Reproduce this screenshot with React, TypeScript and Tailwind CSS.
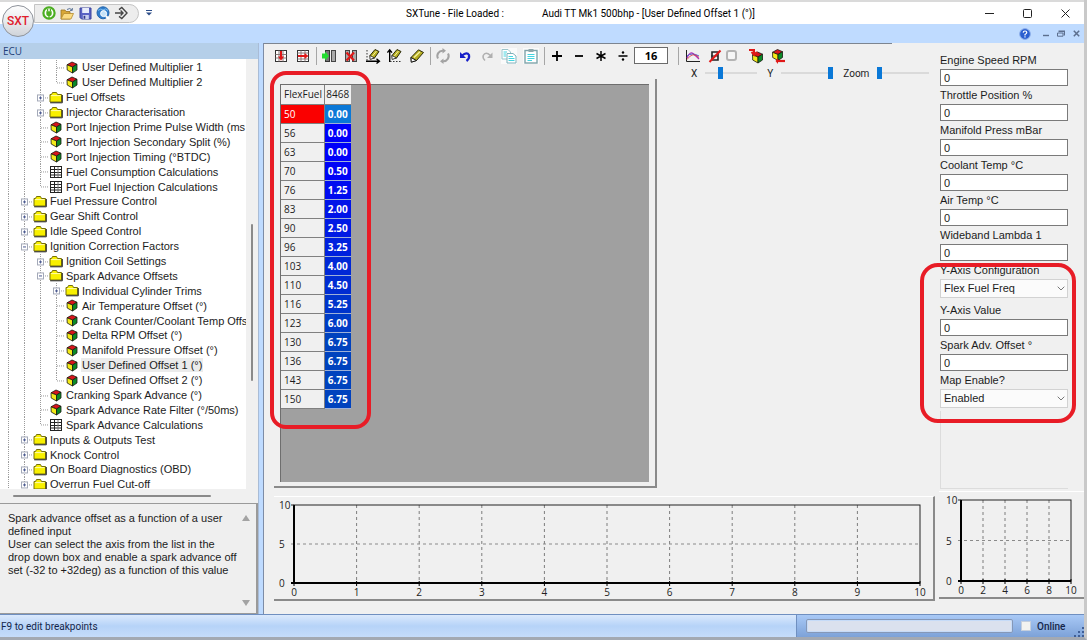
import React from "react";

type IconKind = "cube" | "folder" | "table";
type Guide = "none" | "line" | "tee" | "elbow" | "plus" | "minus";
interface TreeItem {
  guides: Guide[];
  icon: IconKind;
  label: string;
  selected?: boolean;
}

const L: Guide = "line";
const T: Guide = "tee";
const E: Guide = "elbow";
const P: Guide = "plus";
const M: Guide = "minus";

const tree: TreeItem[] = [
  { guides: [L, L, L, T], icon: "cube", label: "User Defined Multiplier 1" },
  { guides: [L, L, L, E], icon: "cube", label: "User Defined Multiplier 2" },
  { guides: [L, L, P], icon: "folder", label: "Fuel Offsets" },
  { guides: [L, L, P], icon: "folder", label: "Injector Characterisation" },
  { guides: [L, L, T], icon: "cube", label: "Port Injection Prime Pulse Width (ms" },
  { guides: [L, L, T], icon: "cube", label: "Port Injection Secondary Split (%)" },
  { guides: [L, L, T], icon: "cube", label: "Port Injection Timing (°BTDC)" },
  { guides: [L, L, T], icon: "table", label: "Fuel Consumption Calculations" },
  { guides: [L, L, E], icon: "table", label: "Port Fuel Injection Calculations" },
  { guides: [L, P], icon: "folder", label: "Fuel Pressure Control" },
  { guides: [L, P], icon: "folder", label: "Gear Shift Control" },
  { guides: [L, P], icon: "folder", label: "Idle Speed Control" },
  { guides: [L, M], icon: "folder", label: "Ignition Correction Factors" },
  { guides: [L, L, P], icon: "folder", label: "Ignition Coil Settings" },
  { guides: [L, L, M], icon: "folder", label: "Spark Advance Offsets" },
  { guides: [L, L, L, P], icon: "folder", label: "Individual Cylinder Trims" },
  { guides: [L, L, L, T], icon: "cube", label: "Air Temperature Offset (°)" },
  { guides: [L, L, L, T], icon: "cube", label: "Crank Counter/Coolant Temp Offs" },
  { guides: [L, L, L, T], icon: "cube", label: "Delta RPM Offset (°)" },
  { guides: [L, L, L, T], icon: "cube", label: "Manifold Pressure Offset (°)" },
  { guides: [L, L, L, T], icon: "cube", label: "User Defined Offset 1 (°)", selected: true },
  { guides: [L, L, L, E], icon: "cube", label: "User Defined Offset 2 (°)" },
  { guides: [L, L, T], icon: "cube", label: "Cranking Spark Advance (°)" },
  { guides: [L, L, T], icon: "cube", label: "Spark Advance Rate Filter (°/50ms)" },
  { guides: [L, L, E], icon: "table", label: "Spark Advance Calculations" },
  { guides: [L, P], icon: "folder", label: "Inputs & Outputs Test" },
  { guides: [L, P], icon: "folder", label: "Knock Control" },
  { guides: [L, P], icon: "folder", label: "On Board Diagnostics (OBD)" },
  { guides: [L, P], icon: "folder", label: "Overrun Fuel Cut-off" },
];

const cells: { axis: number; value: string; tone: string }[] = [
  { axis: 50, value: "0.00", tone: "bg-[#0a78d7]" },
  { axis: 56, value: "0.00", tone: "bg-[#0000fa]" },
  { axis: 63, value: "0.00", tone: "bg-[#0000fa]" },
  { axis: 70, value: "0.50", tone: "bg-[#0004f6]" },
  { axis: 76, value: "1.25", tone: "bg-[#000cf0]" },
  { axis: 83, value: "2.00", tone: "bg-[#0014e8]" },
  { axis: 90, value: "2.50", tone: "bg-[#001ae4]" },
  { axis: 96, value: "3.25", tone: "bg-[#0020de]" },
  { axis: 103, value: "4.00", tone: "bg-[#0028d6]" },
  { axis: 110, value: "4.50", tone: "bg-[#002cd2]" },
  { axis: 116, value: "5.25", tone: "bg-[#0034cc]" },
  { axis: 123, value: "6.00", tone: "bg-[#003cc6]" },
  { axis: 130, value: "6.75", tone: "bg-[#0042be]" },
  { axis: 136, value: "6.75", tone: "bg-[#0042be]" },
  { axis: 143, value: "6.75", tone: "bg-[#0042be]" },
  { axis: 150, value: "6.75", tone: "bg-[#0042be]" },
];

function Guides({ kind }: { kind: Guide }) {
  const full = kind !== "elbow";
  const branch = kind !== "line";
  const box = kind === "plus" || kind === "minus";
  return (
    <svg className="h-full w-4 shrink-0 overflow-visible" aria-hidden="true">
      <line x1="8.5" y1="0" x2="8.5" y2={full ? "100%" : "50%"} stroke="#9a9a9a" strokeDasharray="1 1" />
      <svg y="50%" className="overflow-visible">
        {branch && <line x1="9" y1="0.5" x2="17" y2="0.5" stroke="#9a9a9a" strokeDasharray="1 1" />}
        {box && <rect x="5.5" y="-2.5" width="6" height="6" fill="#fff" stroke="#a3a9b8" />}
        {box && <line x1="7" y1="0.5" x2="10" y2="0.5" stroke="#4b5a90" />}
        {kind === "plus" && <line x1="8.5" y1="-1" x2="8.5" y2="2" stroke="#4b5a90" />}
      </svg>
    </svg>
  );
}

function CubeShape() {
  return (
    <g stroke="#1a1a10" strokeWidth="0.8" strokeLinejoin="round">
      <path d="M1 3.8 6 1 11 3.2 6.5 6Z" fill="#d8141c" />
      <path d="M1 3.8 6.5 6V12L1.2 9Z" fill="#f4ea18" />
      <path d="M11 3.2 6.5 6V12L11 9Z" fill="#0b8a28" />
    </g>
  );
}

function TreeIcon({ kind }: { kind: IconKind }) {
  if (kind === "cube")
    return (
      <svg viewBox="0 0 12 13" className="h-[13px] w-3" aria-hidden="true">
        <CubeShape />
      </svg>
    );
  if (kind === "folder")
    return (
      <svg viewBox="0 0 14 13" className="h-[13px] w-[14px]" aria-hidden="true">
        <path d="M1 11V3.5H2.5L3.5 1.5H7.5L8.5 3.5H12.5V11Z" fill="#f8f000" stroke="#77700a" />
        <path d="M2 4.6H11.5" stroke="#fffcae" />
        <path d="M1.2 11.8H13.3V4" fill="none" stroke="#222" />
      </svg>
    );
  return (
    <svg viewBox="0 0 12 12" className="size-3" aria-hidden="true">
      <rect x="0.5" y="0.5" width="11" height="11" fill="#fff" stroke="#222" />
      <path d="M1 3.5H11M1 6.5H11M1 9H11M4.5 1V11" stroke="#222" />
      <path d="M8 1V11" stroke="#777" />
    </svg>
  );
}

function QuickIcons() {
  const cls = "flex h-4 w-[18px] items-center justify-center";
  return (
    <>
      <button aria-label="Connect" className={cls}>
        <svg viewBox="0 0 14 14" className="size-[14px]">
          <circle cx="7" cy="7" r="5.6" fill="#fff" stroke="#4cae22" strokeWidth="2.2" />
          <path d="M5.6 3V5.5M8.4 3V5.5M7 8V12.5" stroke="#4cae22" strokeWidth="1.3" />
          <path d="M4.3 5.2H9.7V7.4A2.7 2.7 0 0 1 4.3 7.4Z" fill="#4cae22" />
        </svg>
      </button>
      <button aria-label="Open" className={cls}>
        <svg viewBox="0 0 14 13" className="h-[13px] w-[14px]">
          <path d="M1 12V3H5L6 4.5H10V12Z" fill="#d9a836" stroke="#9b7423" strokeWidth="0.8" />
          <path d="M1 12 3.8 6.5H13.5L11 12Z" fill="#fbdc82" stroke="#b58a2d" strokeWidth="0.8" />
          <path d="M7 2.5Q10 .3 12 3M12.3 1V3.4H10" fill="none" stroke="#5b7396" />
        </svg>
      </button>
      <button aria-label="Save" className={cls}>
        <svg viewBox="0 0 13 13" className="size-[13px]">
          <path d="M1 1H12V12H2.5L1 10.5Z" fill="#5a62c4" stroke="#3d449c" />
          <rect x="3.2" y="1" width="6.8" height="5" fill="#e8ecfb" />
          <rect x="3.8" y="8" width="6" height="4" fill="#c9cfee" />
          <rect x="4.6" y="8.8" width="1.7" height="3" fill="#32398c" />
        </svg>
      </button>
      <button aria-label="Find" className={cls}>
        <svg viewBox="0 0 14 14" className="size-[14px]">
          <circle cx="7" cy="6.8" r="6" fill="#2f7ccb" stroke="#2465ab" />
          <path d="M2 4.4Q5 2 7 4 10 1.5 12 4.5" fill="none" stroke="#7dbcf0" />
          <circle cx="7.6" cy="7.6" r="3" fill="#c5e2f8" stroke="#fff" />
          <path d="M9.8 10 13 13" stroke="#fff" strokeWidth="2" />
        </svg>
      </button>
      <button aria-label="Go to" className={cls}>
        <svg viewBox="0 0 14 14" className="size-[14px]" fill="none" stroke="#454545" strokeWidth="1.4">
          <path d="M1 7H9M6.6 4.6 9 7 6.6 9.4" />
          <path d="M5 3.6 7.8 1.4 13 7 7.8 12.6 5 10.4" />
        </svg>
      </button>
    </>
  );
}

function Tool({ label, children }: { label: string; children: React.ReactNode }) {
  return (
    <button aria-label={label} className="flex h-5 w-[22px] shrink-0 items-center justify-center">
      <svg viewBox="0 0 16 16" className="size-4" fill="none">
        {children}
      </svg>
    </button>
  );
}

function Divider() {
  return <span className="mr-px ml-[2px] h-[18px] w-px shrink-0 bg-[#a6a6a6]" />;
}

function Pencil() {
  return (
    <>
      <path d="M5 7.5 10 1.5 14 3.5 9.5 10 5.5 11Z" fill="#b6ae20" stroke="#28280a" />
      <path d="M7 8.5 11.5 3" stroke="#f5f2a0" />
      <path d="M5 7.5 9.5 10 5 11.4Z" fill="#fff" stroke="#222" strokeWidth="0.8" />
    </>
  );
}

function Toolbar() {
  return (
    <div className="flex h-[23px] items-center pl-[6px]" role="toolbar">
      <Tool label="Interpolate vertically">
        <rect x="2.5" y="2.5" width="11" height="11" fill="#fff" stroke="#333" />
        <path d="M2.5 6.5H13.5M2.5 10H13.5M6 2.5V13.5M10 2.5V13.5" stroke="#8a7a7a" />
        <path d="M8 3V11" stroke="#e01818" strokeWidth="2" />
        <path d="M5 8.5H11L8 12.8Z" fill="#e01818" />
      </Tool>
      <Tool label="Interpolate horizontally">
        <rect x="2.5" y="2.5" width="11" height="11" fill="#fff" stroke="#333" />
        <path d="M2.5 5H13.5M2.5 11H13.5M6 2.5V13.5M10 2.5V13.5" stroke="#8a7a7a" />
        <path d="M3 8H11" stroke="#e01818" strokeWidth="2" />
        <path d="M9.5 5V11L13.5 8Z" fill="#e01818" />
      </Tool>
      <Divider />
      <Tool label="Insert column">
        <rect x="4.5" y="2.5" width="4" height="11" fill="#777" stroke="#333" />
        <rect x="10.5" y="2.5" width="4" height="11" fill="#aaa" stroke="#444" />
        <path d="M1 5.5H4V3.5L8 8 4 12.5V10.5H1Z" fill="#22dd30" />
      </Tool>
      <Tool label="Delete column">
        <rect x="2.5" y="2.5" width="4" height="11" fill="#aaa" stroke="#444" />
        <rect x="9.5" y="2.5" width="4" height="11" fill="#aaa" stroke="#444" />
        <path d="M3.5 4.5 11 12.5M11 4.5 3.5 12.5" stroke="#e01818" strokeWidth="2.2" />
      </Tool>
      <Tool label="Edit horizontal axis">
        <Pencil />
        <path d="M2 2V13" stroke="#333" strokeDasharray="1.5 1.5" />
        <path d="M1 13.2H14M11.5 10.8 14.4 13.2 11.5 15.5" stroke="#000" strokeWidth="1.4" />
      </Tool>
      <Tool label="Edit vertical axis">
        <Pencil />
        <path d="M2.7 14V2M.4 4.6 2.7 1.8 5 4.6" stroke="#000" strokeWidth="1.4" />
        <path d="M3 13.5H15" stroke="#333" strokeDasharray="1.5 1.5" />
      </Tool>
      <Tool label="Edit value">
        <path d="M2 9.5 9.5 1.8 14.5 4.5 7.5 12.5 2.5 14Z" fill="#b6ae20" stroke="#28280a" />
        <path d="M5 9.5 11 3.8" stroke="#f5f2a0" strokeWidth="1.4" />
        <path d="M2 9.5 7.5 12.5 2.2 14.2Z" fill="#fff" stroke="#111" />
      </Tool>
      <Divider />
      <Tool label="Refresh">
        <path d="M3 10.5A5.2 5.2 0 0 1 8 2.8M13 5.5A5.2 5.2 0 0 1 8 13.2" stroke="#a3a3a3" strokeWidth="2" />
        <path d="M7.5 0 11 2.8 7.5 5.6ZM8.5 10.4 5 13.2 8.5 16Z" fill="#a3a3a3" />
      </Tool>
      <Tool label="Undo">
        <path d="M5 7.5Q10 3.6 12 7 12.8 10.5 9.5 13" stroke="#1720c8" strokeWidth="2.2" />
        <path d="M3 4V10H9Z" fill="#1720c8" />
      </Tool>
      <Tool label="Redo">
        <path d="M11.5 7.5Q6.5 3 4.2 7.5 3.4 10 6 12.5" stroke="#b0b0b0" strokeWidth="1.5" />
        <path d="M13.5 4.5V10H8Z" fill="#b0b0b0" />
      </Tool>
      <Tool label="Copy">
        <rect width="16" height="16" fill="#fafafa" />
        <path d="M1 1.5H7L9.5 4V11H1Z" fill="#fff" stroke="#9cc4ca" />
        <path d="M6 5.5H12L15 8V15H6Z" fill="#fff" stroke="#7fb0ba" />
        <path d="M2.5 4H6M2.5 6H5M2.5 8H5M7.5 8.5H12M7.5 10.5H13.5M7.5 12.5H13.5" stroke="#45d5e0" />
      </Tool>
      <Tool label="Paste">
        <rect width="16" height="16" fill="#fafafa" />
        <rect x="2" y="2.5" width="12" height="12.5" fill="#fff" stroke="#7fa4aa" strokeWidth="1.4" />
        <rect x="5.5" y="1" width="5" height="3" fill="#8fa7ab" />
        <path d="M4.5 6.5H11.5M4.5 8.5H11.5M4.5 10.5H11.5M4.5 12.5H9" stroke="#45d5e0" />
      </Tool>
      <Divider />
      <Tool label="Add">
        <path d="M3 8H13M8 3V13" stroke="#000" strokeWidth="1.8" />
      </Tool>
      <Tool label="Subtract">
        <path d="M4 8H12" stroke="#000" strokeWidth="1.8" />
      </Tool>
      <Tool label="Multiply">
        <path d="M8 3V13M3.5 5.5 12.5 10.5M12.5 5.5 3.5 10.5" stroke="#000" strokeWidth="1.5" />
      </Tool>
      <Tool label="Divide">
        <path d="M3.5 8H12.5" stroke="#000" strokeWidth="1.5" />
        <circle cx="8" cy="4.5" r="1.2" fill="#000" />
        <circle cx="8" cy="11.5" r="1.2" fill="#000" />
      </Tool>
      <input
        aria-label="Operand"
        defaultValue="16"
        className="h-[17px] w-[34px] shrink-0 border border-[#6b6b6b] bg-white text-center font-['Open_Sans',sans-serif] text-[11px] leading-none font-bold text-black"
      />
      <span className="mr-[3px] ml-[10px] h-[18px] w-px shrink-0 bg-[#a6a6a6]" />
      <Tool label="Graph">
        <path d="M1.5 2V13.5H15" stroke="#222" />
        <path d="M2 10Q5 3 8 5.5T14 11" stroke="#b02bb8" strokeWidth="1.2" />
        <path d="M2 8Q7 4 14 8" stroke="#5359d0" />
        <path d="M2 11.5Q8 3 14 9.5" stroke="#d83838" strokeWidth="0.8" />
      </Tool>
      <Tool label="Clear trace">
        <path d="M5 4H11V12H5Z" stroke="#222" strokeWidth="1.6" />
        <path d="M4 8H11" stroke="#222" />
        <path d="M2.5 14 13.5 2.5" stroke="#e01818" strokeWidth="2" />
      </Tool>
      <input
        type="checkbox"
        aria-label="Follow"
        className="mr-[8px] size-[11px] shrink-0 appearance-none rounded-[3px] border-2 border-[#b4b4b4] bg-[#f6f6f6]"
      />
      <Tool label="Import map">
        <g transform="translate(3.5 3)">
          <CubeShape />
        </g>
        <path d="M1 2H6V5M3.5 4 6.4 7 9 4" stroke="#e01818" strokeWidth="2" />
      </Tool>
      <Tool label="Export map">
        <g transform="translate(1.5 0.5)">
          <CubeShape />
        </g>
        <path d="M8 13H15" stroke="#e01818" strokeWidth="2.2" />
        <path d="M8 10V16L5.5 13Z" fill="#e01818" />
      </Tool>
    </div>
  );
}

function Slider({ label, value }: { label: string; value: number }) {
  return (
    <label className="flex items-center gap-2">
      <span>{label}</span>
      <input
        type="range"
        defaultValue={value}
        className="h-3 w-[52px] appearance-none bg-transparent [&::-webkit-slider-runnable-track]:h-[2px] [&::-webkit-slider-runnable-track]:bg-[#dadada] [&::-webkit-slider-thumb]:-mt-[5px] [&::-webkit-slider-thumb]:h-3 [&::-webkit-slider-thumb]:w-[5px] [&::-webkit-slider-thumb]:appearance-none [&::-webkit-slider-thumb]:bg-[#0a78d7]"
      />
    </label>
  );
}

function Chart({ ticks, name }: { ticks: number[]; name: string }) {
  return (
    <svg
      role="img"
      aria-label={name}
      className="size-full overflow-visible font-['Open_Sans',sans-serif] text-[10px]"
      fill="#222"
    >
      {ticks.slice(1, -1).map((t) => (
        <line key={t} x1={`${t * 10}%`} x2={`${t * 10}%`} y1="0" y2="100%" stroke="#7d7d7d" strokeDasharray="3 3" />
      ))}
      <line x1="-3" x2="100%" y1="50%" y2="50%" stroke="#8a8a8a" strokeDasharray="3 3" />
      <rect width="100%" height="100%" fill="none" stroke="#222" />
      <line x1="0" x2="0" y1="0" y2="100%" stroke="#000" strokeWidth="2" />
      <line x1="-3" x2="100%" y1="100%" y2="100%" stroke="#000" strokeWidth="2" />
      <line x1="-3" x2="0" y1="0" y2="0" stroke="#222" />
      {ticks.map((t) => (
        <svg key={t} x={`${t * 10}%`} y="100%" className="overflow-visible">
          <line y1="-2" y2="3" stroke="#000" />
          <text y="13" textAnchor="middle">{t}</text>
        </svg>
      ))}
      {[10, 5, 0].map((v) => (
        <svg key={v} y={`${100 - v * 10}%`} className="overflow-visible">
          <text x="-15" y="4">{v}</text>
        </svg>
      ))}
    </svg>
  );
}

function Field({ id, label }: { id: string; label: string }) {
  return (
    <div>
      <label htmlFor={id} className="block h-[18px] leading-[18px]">{label}</label>
      <input id={id} defaultValue="0" className="block h-[17px] w-full border border-[#7a7a7a] bg-white px-[3px] leading-none" />
    </div>
  );
}

function Choice({ id, label, value }: { id: string; label: string; value: string }) {
  return (
    <div className="pb-[3px]">
      <label htmlFor={id} className="block h-[18px] leading-[18px]">{label}</label>
      <div className="relative">
        <select
          id={id}
          className="block h-[19px] w-full appearance-none border border-[#d2d2d2] bg-[#fbfbfb] px-[3px] leading-none"
        >
          <option>{value}</option>
        </select>
        <svg viewBox="0 0 8 5" className="pointer-events-none absolute top-[7px] right-[3px] h-[5px] w-2" fill="none">
          <path d="M.7.7 4 4 7.3.7" stroke="#777" />
        </svg>
      </div>
    </div>
  );
}

export default function App() {
  return (
    <div className="flex h-screen flex-col overflow-hidden border-r-[3px] border-b-[3px] border-r-[#c9c9c9] border-b-[#a3a9b2] bg-[#f0f0f0] font-['Liberation_Sans',Arial,sans-serif] text-[11px] text-[#1c1c1c]">
      <header className="relative shrink-0 border-t-2 border-[#dadada]">
        <div className="flex h-[22px] items-center bg-white pl-[34px] font-['Roboto',sans-serif] text-[10px] text-black">
          <div className="flex h-[19px] items-center rounded-r-full border border-[#c4c4c4] bg-[#ededed] pr-2 pl-[5px]">
            <QuickIcons />
          </div>
          <button aria-label="Customise toolbar" className="ml-[7px]">
            <svg viewBox="0 0 6 6" className="size-[6px]">
              <path d="M0 .5H6" stroke="#2c4d88" />
              <path d="M0 2.5H6L3 5.5Z" fill="#2c4d88" />
            </svg>
          </button>
          <h1 className="flex flex-1 justify-center gap-[38px] pl-6 whitespace-nowrap">
            <span>SXTune - File Loaded :</span>
            <span>Audi TT Mk1 500bhp - [User Defined Offset 1 (°)]</span>
          </h1>
          <div className="flex items-center gap-[29px] pr-[14px]">
            <button aria-label="Minimise">
              <svg viewBox="0 0 9 9" className="size-[9px]"><path d="M0 4.5H9" stroke="#222" /></svg>
            </button>
            <button aria-label="Maximise">
              <svg viewBox="0 0 9 9" className="size-[9px]">
                <rect x=".5" y=".5" width="8" height="8" rx="1" fill="none" stroke="#222" />
              </svg>
            </button>
            <button aria-label="Close">
              <svg viewBox="0 0 9 9" className="size-[9px]"><path d="M.5.5 8.5 8.5M8.5.5.5 8.5" stroke="#222" /></svg>
            </button>
          </div>
        </div>
        <div className="flex h-[19px] items-center justify-end gap-[8px] bg-[#bfdbff] pr-1">
          <button aria-label="Help" className="mr-[3px]">
            <svg viewBox="0 0 12 12" className="size-3">
              <circle cx="6" cy="6" r="5.4" fill="#2b5fd0" stroke="#8fb1ea" />
              <path d="M4.2 4.6Q4.3 3 6 3T7.8 4.6Q7.8 5.6 6 6.5V7.4M6 8.3V9.4" fill="none" stroke="#fff" strokeWidth="1.2" />
            </svg>
          </button>
          <button aria-label="Minimise document">
            <svg viewBox="0 0 7 7" className="size-[7px]"><path d="M1 5.5H7" stroke="#5c6f8e" strokeWidth="1.4" /></svg>
          </button>
          <button aria-label="Restore document">
            <svg viewBox="0 0 8 7" className="h-[7px] w-2" fill="none" stroke="#5c6f8e">
              <path d="M1.5 1.2H7.5V5.5" strokeWidth="1.4" />
              <path d="M.5 3H6V6.2H.5Z" />
            </svg>
          </button>
          <button aria-label="Close document">
            <svg viewBox="0 0 7 7" className="size-[7px]"><path d="M.8.8 6.2 6.2M6.2.8.8 6.2" stroke="#5c6f8e" strokeWidth="1.5" /></svg>
          </button>
        </div>
        <button
          aria-label="Application menu"
          className="absolute top-[3px] left-[2px] flex size-8 items-center justify-center rounded-full border border-[#8e939b] bg-linear-to-b from-[#fdfdfd] via-[#e9ebee] to-[#cfd3d9] font-['Roboto',sans-serif] text-[12px] font-medium text-[#e0202c]"
        >
          SXT
        </button>
      </header>

      <div className="flex min-h-0 flex-1">
        <aside className="flex w-[259px] shrink-0 flex-col border-r border-[#a9bcd6]">
          <h2 className="h-4 shrink-0 bg-[#b5cfe9] pl-[3px] font-['Open_Sans',sans-serif] text-[10px] leading-4 text-[#1f3f7a]">
            ECU
          </h2>
          <div className="flex min-h-0 flex-1">
            <nav className="min-w-0 flex-1 overflow-hidden bg-white pt-px">
              <ul className="flex h-[432px] flex-col">
                {tree.map((item) => (
                  <li key={item.label} className="flex min-h-0 flex-1 items-center">
                    {item.guides.map((g, i) => (
                      <Guides key={i} kind={g} />
                    ))}
                    <span className="flex w-4 shrink-0 items-center justify-center">
                      <TreeIcon kind={item.icon} />
                    </span>
                    <a
                      href="#"
                      className={
                        item.selected
                          ? "ml-px bg-[#ebebeb] px-px leading-[14px] whitespace-nowrap"
                          : "ml-px px-px leading-[14px] whitespace-nowrap"
                      }
                    >
                      {item.label}
                    </a>
                  </li>
                ))}
              </ul>
            </nav>
            <div className="flex w-3 flex-col items-center bg-[#f0f0f0] pt-[165px]">
              <span className="h-[157px] w-[2px] rounded bg-[#8a8a8a]" />
            </div>
          </div>
          <div className="flex h-[14px] shrink-0 items-center bg-[#f0f0f0] pl-[13px]">
            <span className="h-[2px] w-[198px] rounded bg-[#8a8a8a]" />
          </div>
          <section className="flex h-[111px] shrink-0 border-t border-r-2 border-b border-[#9a9a9a] bg-[#efefef] pt-2 pl-2">
            <p className="flex-1 leading-[13px] whitespace-nowrap">
              Spark advance offset as a function of a user
              <br />
              defined input
              <br />
              User can select the axis from the list in the
              <br />
              drop down box and enable a spark advance off
              <br />
              set (-32 to +32deg) as a function of this value
            </p>
            <div className="flex flex-col justify-between pt-[3px] pr-[6px] pb-[7px]">
              <svg viewBox="0 0 8 6" className="h-[6px] w-2"><path d="M4 0 8 6H0Z" fill="#a3a3a3" /></svg>
              <svg viewBox="0 0 8 6" className="h-[6px] w-2"><path d="M4 6 8 0H0Z" fill="#a3a3a3" /></svg>
            </div>
          </section>
        </aside>

        <div className="w-1 shrink-0 bg-[#bfdbff]" />

        <main className="flex min-w-0 flex-1 flex-col border-l border-[#7d8ca6]">
          <div className="flex min-h-0 flex-1">
            <div className="flex min-w-0 flex-1 flex-col">
              <div className="h-px w-[628px] max-w-full shrink-0 bg-[#7d8590]" />
              <Toolbar />
              <div className="flex h-3 shrink-0 items-center gap-[10px] pl-[427px] font-['Roboto',sans-serif] text-[10px]">
                <Slider label="X" value={28} />
                <Slider label="Y" value={100} />
                <Slider label="Zoom" value={0} />
              </div>
              <div className="relative mb-[3px] ml-[10px] min-h-0 w-[383px] flex-1 border-r-2 border-b-2 border-[#8a8a8a] pt-[5px] pr-[6px] pb-[4px] pl-[6px]">
                <div className="h-full border-t border-l border-[#6e6e6e] bg-[#a0a0a0]">
                  <table className="w-[70px] table-fixed border-collapse font-['Open_Sans',sans-serif] text-[10px] leading-none">
                    <colgroup>
                      <col className="w-[43px]" />
                      <col className="w-[27px]" />
                    </colgroup>
                    <thead>
                      <tr className="h-[19px] bg-[#f0f0f0]">
                        <th className="border-r border-b border-[#808080] pl-[3px] text-left font-normal">FlexFuel</th>
                        <th className="border-b border-[#808080] font-normal">8468</th>
                      </tr>
                    </thead>
                    <tbody>
                      {cells.map((c) => (
                        <tr key={c.axis} className="h-[19px]">
                          <th
                            scope="row"
                            className={
                              c.axis === 50
                                ? "border-r border-b border-[#808080] bg-[#fa0000] pl-[3px] text-left font-normal text-white"
                                : "border-r border-b border-[#808080] bg-[#f0f0f0] pl-[3px] text-left font-normal"
                            }
                          >
                            {c.axis}
                          </th>
                          <td className={`${c.tone} border-b border-[#9db0d8] text-center font-bold text-white`}>{c.value}</td>
                        </tr>
                      ))}
                    </tbody>
                  </table>
                </div>
                <div className="pointer-events-none absolute -top-[8px] -left-[4px] h-[358px] w-[101px] rounded-[16px] border-4 border-[#e81c26]" />
              </div>
            </div>

            <div className="relative w-[148px] shrink-0 pt-[8px] pr-4 pl-1">
              <form className="flex flex-col">
                <Field id="rpm" label="Engine Speed RPM" />
                <Field id="throttle" label="Throttle Position %" />
                <Field id="map" label="Manifold Press mBar" />
                <Field id="coolant" label="Coolant Temp °C" />
                <Field id="air" label="Air Temp °C" />
                <Field id="lambda" label="Wideband Lambda 1" />
                <Choice id="yaxis" label="Y-Axis Configuration" value="Flex Fuel Freq" />
                <Field id="yvalue" label="Y-Axis Value" />
                <Field id="spark" label="Spark Adv. Offset °" />
                <Choice id="enable" label="Map Enable?" value="Enabled" />
              </form>
              <div className="h-[78px] border-b border-l border-[#dcdcdc]" />
              <div className="pointer-events-none absolute top-[220px] -left-4 h-[160px] w-[156px] rounded-[18px] border-4 border-[#e81c26]" />
            </div>
          </div>

          <div className="flex h-[123px] shrink-0 gap-1">
            <section className="mt-[5px] mb-[13px] ml-[10px] min-w-0 flex-1 border-t border-r-2 border-b-2 border-t-white border-r-[#8a8a8a] border-b-[#8a8a8a] pt-2 pr-[13px] pb-4 pl-5">
              <Chart name="Trace" ticks={[0, 1, 2, 3, 4, 5, 6, 7, 8, 9, 10]} />
            </section>
            <section className="mb-[15px] w-[145px] shrink-0 border-t border-b-2 border-t-white border-b-[#8a8a8a] pt-2 pr-[13px] pb-4 pl-[22px]">
              <Chart name="Profile" ticks={[0, 2, 4, 6, 8, 10]} />
            </section>
          </div>
        </main>
      </div>

      <footer className="flex h-[23px] shrink-0 border-t border-[#6f8fc0] bg-linear-to-b from-[#dbe9fc] via-[#b6d3f8] to-[#c5dcfa] font-['Roboto',sans-serif] text-[10px] text-[#14264a]">
        <p className="flex-1 pl-px leading-[24px]">F9 to edit breakpoints</p>
        <div className="relative flex w-[288px] items-center border-l border-[#6f8fc0] bg-linear-to-b from-[#a9c9f6] to-[#7da2d8] pl-[9px]">
          <div role="progressbar" aria-label="Progress" className="h-[14px] w-[207px] rounded-[2px] border border-[#8598b8] bg-[#dbe1ee] ring-1 ring-[#c6dbf8] ring-inset" />
          <label className="ml-2 flex items-center gap-[6px] font-medium">
            <input type="checkbox" className="size-[10px] appearance-none border border-[#c5cfdd] bg-[#f3f3f0]" />
            Online
          </label>
          <svg viewBox="0 0 10 10" className="absolute right-0 bottom-0 size-[10px]" fill="#3f5f98">
            <path d="M8 0h2v2H8zM8 4h2v2H8zM4 4h2v2H4zM8 8h2v2H8zM4 8h2v2H4zM0 8h2v2H0z" />
          </svg>
        </div>
      </footer>
    </div>
  );
}
